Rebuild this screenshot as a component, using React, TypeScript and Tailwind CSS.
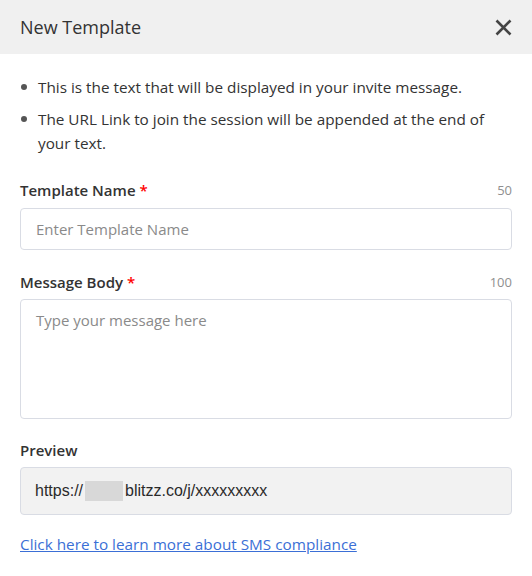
import React from "react";

export default function App() {
  const font = { fontFamily: "'Open Sans', Lato, sans-serif" };
  return (
    <div className="w-[532px] h-[576px] bg-white text-[#333]" style={font}>
      <div className="h-[54px] bg-[#f0f0f0] flex items-center justify-between pl-5 pr-5">
        <div className="text-[18px] text-[#333]">New Template</div>
        <svg width="17" height="17" viewBox="0 0 17 17">
          <path d="M1.5 1.5 L15.5 15.5 M15.5 1.5 L1.5 15.5" stroke="#444" strokeWidth="2.6" />
        </svg>
      </div>
      <div className="px-5">
        <ul className="pt-[21px] text-[15.3px] leading-[24px] text-[#333]">
          <li className="flex">
            <span className="w-[18px] shrink-0 flex items-center h-[24px]"><span className="w-[6px] h-[6px] rounded-full bg-[#555] ml-[1px]" /></span>
            <span>This is the text that will be displayed in your invite message.</span>
          </li>
          <li className="flex mt-[8px]">
            <span className="w-[18px] shrink-0 flex items-center h-[24px]"><span className="w-[6px] h-[6px] rounded-full bg-[#555] ml-[1px]" /></span>
            <span>The URL Link to join the session will be appended at the end of your text.</span>
          </li>
        </ul>
        <div className="mt-[24px] flex justify-between items-end leading-[22px]">
          <div className="text-[15px] font-semibold text-[#333]">Template Name <span className="text-[#f00]">*</span></div>
          <div className="text-[13px] text-[#8f8f8f]">50</div>
        </div>
        <div className="mt-[7px] h-[42px] border border-[#d9dce4] rounded-[4px] flex items-center px-[15px] text-[15px] text-[#8a8a8a]">
          Enter Template Name
        </div>
        <div className="mt-[21px] flex justify-between items-end leading-[22px]">
          <div className="text-[15px] font-semibold text-[#333]">Message Body <span className="text-[#f00]">*</span></div>
          <div className="text-[13px] text-[#8f8f8f]">100</div>
        </div>
        <div className="mt-[6px] h-[120px] border border-[#d9dce4] rounded-[4px] px-[15px] pt-[8px] text-[15px] leading-[24px] text-[#8a8a8a]">
          Type your message here
        </div>
        <div className="mt-[20px] text-[15px] leading-[22px] font-semibold text-[#333]">Preview</div>
        <div className="mt-[6px] h-[48px] bg-[#f2f2f2] border border-[#d9dce4] rounded-[4px] flex items-center px-[14px] text-[16px] text-[#2a2a2a]" style={{ fontFamily: "'Liberation Sans', Arial, sans-serif" }}>
          <span>https://</span>
          <span className="inline-block w-[38px] h-[20px] bg-[#d8d8d8] mx-[2px]" />
          <span>blitzz.co/j/xxxxxxxxx</span>
        </div>
        <div className="mt-[18px] leading-[22px]">
          <a href="#" className="text-[15.3px] text-[#3b6fd6] underline">Click here to learn more about SMS compliance</a>
        </div>
      </div>
    </div>
  );
}
